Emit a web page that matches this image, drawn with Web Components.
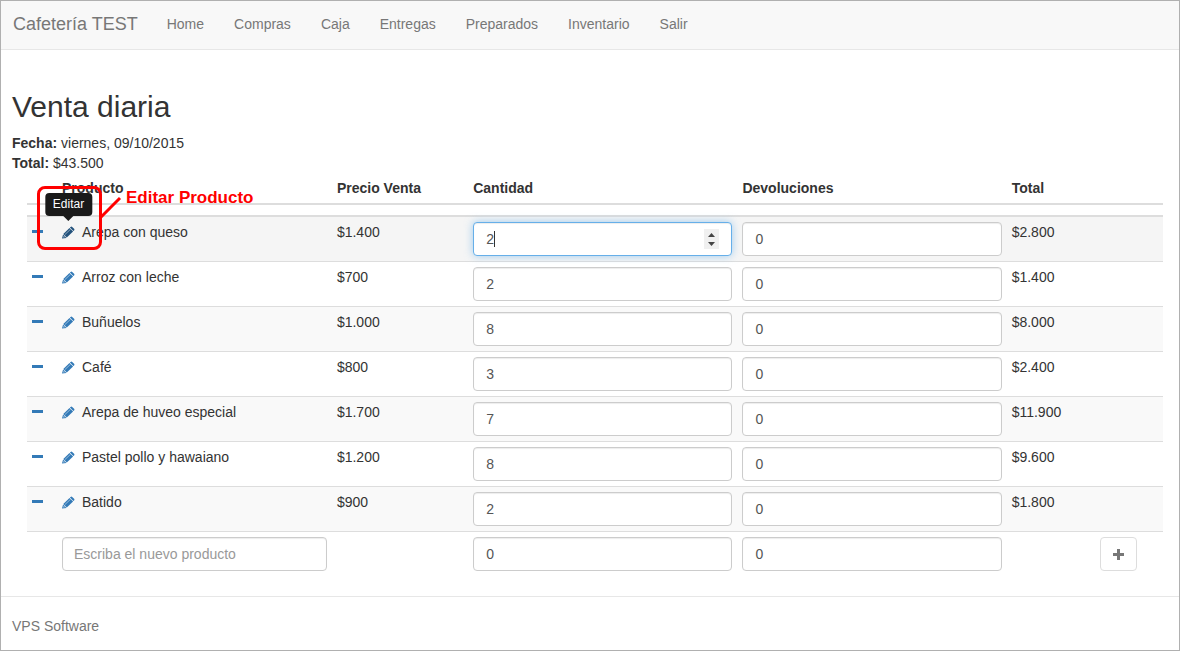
<!DOCTYPE html>
<html lang="es">
  <head>
    <meta charset="utf-8">
    <title>Cafetería TEST</title>
    <style>
      *{box-sizing: border-box;}
      body {
        margin: 0;
        min-height: 100vh;
        border: 1px solid #b0b0b0;
        background: #fff;
        color: #333;
        font: 14px/20px "Liberation Sans", Arial, sans-serif;
      }
    </style>
  </head>
  <body>

    <vps-navbar brand="Cafetería TEST">
      <a href="#home">Home</a>
      <a href="#compras">Compras</a>
      <a href="#caja">Caja</a>
      <a href="#entregas">Entregas</a>
      <a href="#preparados">Preparados</a>
      <a href="#inventario">Inventario</a>
      <a href="#salir">Salir</a>
    </vps-navbar>

    <vps-page>
      <span slot="title">Venta diaria</span>
      <div><b>Fecha:</b> viernes, 09/10/2015</div>
      <div><b>Total:</b> $43.500</div>
      <vps-sales></vps-sales>
      <span slot="footer">VPS Software</span>
    </vps-page>

    <!-- ICON -------------------------------------------------------------------------------------------- -->

    <script>
      const ICONS = {
        minus: '<path d="M0 5h11v3H0z"/>',
        plus: '<path d="M5 1h3v4h4v3H8v4H5V8H1V5h4z"/>',
        pencil: '<path d="M8.600 .9q.8-.8 1.600 0l1.900 1.900q.8.8 0 1.600l-.7.7-3.500-3.500z"/>' +
          '<path d="M7.500 1.900l3.600 3.600-6.300 6.100-3.500-3.600z"/><path d="M1.100 8.400l3.400 3.500L0 12.600z"/>' +
          '<path d="M2.900 8.600l5.600-5.300" stroke="#fff" stroke-opacity=".6" stroke-width=".8"/>' +
          '<circle cx="1.900" cy="10.900" r=".7" fill="#fff" fill-opacity=".7"/>'
      };

      class VpsIconElement extends HTMLElement {

        constructor(){
          super();
          this.attachShadow({mode: 'open'});
        }

        connectedCallback () {
          this.shadowRoot.innerHTML = `
            <style>
              :host { display: block; width: 13px; height: 13px; }
              svg { display: block; fill: currentColor; }
            </style>
            <svg width="13" height="13" viewBox="0 0 13 13" aria-hidden="true">${ICONS[this.getAttribute('name')]}</svg>`;
        }

      }
      window.customElements.define('vps-icon', VpsIconElement);
    </script>

    <!-- NAVBAR ------------------------------------------------------------------------------------------ -->

    <template id="vps-navbar-template">
      <style>
        :host { display: block; background: #f8f8f8; border-bottom: 1px solid #e7e7e7; }
        nav {
          display: flex; flex-flow: row wrap;
          align-items: center;
          padding: 0 12px 2px;
        }
        .brand { margin-right: 14px; font-size: 18px; color: #777; text-decoration: none; }
        ::slotted(a) { padding: 13px 15px; color: #777; text-decoration: none; }
      </style>
      <nav>
        <a class="brand" href="#"></a>
        <slot></slot>
      </nav>
    </template>

    <script>
      class VpsNavbarElement extends HTMLElement {

        constructor(){
          super();
          this.attachShadow({mode: 'open'});
        }

        connectedCallback () {
          const template = document.querySelector('#vps-navbar-template');
          this.shadowRoot.appendChild(template.content.cloneNode(true));
          this.shadowRoot.querySelector('.brand').textContent = this.getAttribute('brand');
        }

      }
      window.customElements.define('vps-navbar', VpsNavbarElement);
    </script>

    <!-- PAGE -------------------------------------------------------------------------------------------- -->

    <template id="vps-page-template">
      <style>
        :host { display: block; }
        main { padding: 40px 11px 20px; }
        h1 { margin: 0 0 10px; font-size: 30px; line-height: 33px; font-weight: 400; }
        footer { border-top: 1px solid #e7e7e7; padding: 19px 11px 13px; color: #777; }
      </style>
      <main>
        <h1><slot name="title"></slot></h1>
        <slot></slot>
      </main>
      <footer><slot name="footer"></slot></footer>
    </template>

    <script>
      class VpsPageElement extends HTMLElement {

        constructor(){
          super();
          this.attachShadow({mode: 'open'});
        }

        connectedCallback () {
          const template = document.querySelector('#vps-page-template');
          this.shadowRoot.appendChild(template.content.cloneNode(true));
        }

      }
      window.customElements.define('vps-page', VpsPageElement);
    </script>

    <!-- TOOLTIP ----------------------------------------------------------------------------------------- -->

    <template id="vps-tooltip-template">
      <style>
        :host { position: relative; display: block; }
        .bubble {
          position: absolute; z-index: 5;
          bottom: 100%; left: 50%;
          transform: translateX(-50%);
          margin-bottom: 10px;
          padding: 3px 8px;
          border-radius: 4px;
          background: #1a1a1a;
          color: #fff;
          font-size: 12px; line-height: 17px;
        }
        .bubble::after {
          content: '';
          position: absolute;
          top: 100%; left: 50%;
          margin-left: -5px;
          border: 5px solid transparent;
          border-top-color: #1a1a1a;
          border-bottom: 0;
        }
      </style>
      <slot></slot>
      <span class="bubble" role="tooltip"></span>
    </template>

    <script>
      class VpsTooltipElement extends HTMLElement {

        constructor(){
          super();
          this.attachShadow({mode: 'open'});
        }

        connectedCallback () {
          const template = document.querySelector('#vps-tooltip-template');
          this.shadowRoot.appendChild(template.content.cloneNode(true));
          this.shadowRoot.querySelector('.bubble').textContent = this.getAttribute('text');
        }

      }
      window.customElements.define('vps-tooltip', VpsTooltipElement);
    </script>

    <!-- CALLOUT ----------------------------------------------------------------------------------------- -->

    <template id="vps-callout-template">
      <style>
        :host {
          position: absolute; z-index: 6;
          display: flex; align-items: flex-start;
          color: #f00;
          font-size: 17px; font-weight: 700;
          pointer-events: none;
        }
        .frame { width: 65px; height: 64px; border: 3px solid #f00; border-radius: 8px; box-sizing: border-box; }
        svg { margin: 10px 4px 0 -2px; }
        span { white-space: nowrap; line-height: 24px; }
      </style>
      <div class="frame"></div>
      <svg width="22" height="22" aria-hidden="true"><path d="M1 21L20 2" stroke="#f00" stroke-width="3"/></svg>
      <span><slot></slot></span>
    </template>

    <script>
      class VpsCalloutElement extends HTMLElement {

        constructor(){
          super();
          this.attachShadow({mode: 'open'});
        }

        connectedCallback () {
          const template = document.querySelector('#vps-callout-template');
          this.shadowRoot.appendChild(template.content.cloneNode(true));
        }

      }
      window.customElements.define('vps-callout', VpsCalloutElement);
    </script>

    <!-- NUMBER FIELD ------------------------------------------------------------------------------------ -->

    <template id="vps-number-template">
      <style>
        :host { display: block; position: relative; }
        input {
          box-sizing: border-box;
          display: block;
          width: 100%; height: 34px;
          margin: 0; padding: 6px 12px;
          border: 1px solid #ccc; border-radius: 4px;
          background: #fff;
          box-shadow: inset 0 1px 1px rgba(0,0,0,.075);
          color: #555;
          font: inherit;
          outline: 0;
          appearance: textfield;
        }
        input::-webkit-inner-spin-button { appearance: none; margin: 0; }
        .spinner, .caret { display: none; position: absolute; }
        :host([active]) input {
          border-color: #66afe9;
          box-shadow: inset 0 1px 1px rgba(0,0,0,.075), 0 0 8px rgba(102,175,233,.6);
        }
        :host([active]) .spinner { display: block; right: 13px; top: 7px; background: #f0f0f0; }
        :host([active]) .caret { display: block; left: 21px; top: 9px; width: 1px; height: 16px; background: #333; }
      </style>
      <input type="number">
      <i class="caret"></i>
      <svg class="spinner" width="15" height="20" aria-hidden="true">
        <path d="M4 8l3.500-4L11 8zM4 13l3.500 4L11 13z" fill="#444"/>
      </svg>
    </template>

    <script>
      class VpsNumberElement extends HTMLElement {

        constructor(){
          super();
          this.attachShadow({mode: 'open'});
        }

        connectedCallback () {
          const template = document.querySelector('#vps-number-template');
          this.shadowRoot.appendChild(template.content.cloneNode(true));
          const input = this.shadowRoot.querySelector('input');
          input.value = this.getAttribute('value');
          input.setAttribute('aria-label', this.getAttribute('label'));
        }

      }
      window.customElements.define('vps-number', VpsNumberElement);
    </script>

    <!-- SALES TABLE ------------------------------------------------------------------------------------- -->

    <template id="vps-sales-template">
      <style>
        *{box-sizing: border-box;}
        :host { display: block; position: relative; padding: 0 5px 0 15px; }
        table { width: 100%; table-layout: fixed; border-collapse: collapse; }
        th, td { padding: 5px; text-align: left; vertical-align: top; }
        thead th { border-bottom: 2px solid #ddd; }
        .gap td { height: 12px; padding: 0; }
        .items { border-top: 2px solid #ddd; }
        .items td, .new td { border-top: 1px solid #ddd; }
        .items tr:first-child td { border-top: 0; }
        .items tr:nth-child(odd) { background: #f9f9f9; }
        .items tr.hover { background: #f5f5f5; }
        button { font: inherit; cursor: pointer; }
        .link { display: block; padding: 0; border: 0; background: none; color: #337ab7; }
        .remove { margin-top: 3px; }
        .hover .edit { color: #23527c; }
        .name { display: flex; align-items: center; gap: 7px; white-space: nowrap; }
        .product {
          display: block;
          width: 100%; height: 34px;
          padding: 6px 11px;
          border: 1px solid #ccc; border-radius: 4px;
          box-shadow: inset 0 1px 1px rgba(0,0,0,.075);
          color: #555;
          font: inherit;
        }
        .product::placeholder { color: #999; }
        .add {
          display: block;
          padding: 6px 11px; height: 34px;
          border: 1px solid #ddd; border-radius: 4px;
          background: #fff;
          color: #777;
        }
        vps-callout { top: 13px; left: 25px; }
      </style>
      <table>
        <colgroup>
          <col style="width: 30px">
          <col style="width: 24.2%">
          <col style="width: 12%">
          <col style="width: 23.7%">
          <col style="width: 23.7%">
          <col>
          <col style="width: 6%">
        </colgroup>
        <thead>
          <tr>
            <th></th><th>Producto</th><th>Precio Venta</th><th>Cantidad</th><th>Devoluciones</th><th colspan="2">Total</th>
          </tr>
        </thead>
        <tbody class="gap"><tr><td colspan="7"></td></tr></tbody>
        <tbody class="items"></tbody>
        <tbody class="new">
          <tr>
            <td></td>
            <td><input class="product" type="text" placeholder="Escriba el nuevo producto" aria-label="Nuevo producto"></td>
            <td></td>
            <td><vps-number value="0" label="Cantidad"></vps-number></td>
            <td><vps-number value="0" label="Devoluciones"></vps-number></td>
            <td></td>
            <td><button class="add" type="button" aria-label="Agregar"><vps-icon name="plus"></vps-icon></button></td>
          </tr>
        </tbody>
      </table>
      <vps-callout>Editar Producto</vps-callout>
    </template>

    <script>
      const SALES = [
        {name: 'Arepa con queso', price: '$1.400', amount: 2, total: '$2.800', active: true},
        {name: 'Arroz con leche', price: '$700', amount: 2, total: '$1.400'},
        {name: 'Buñuelos', price: '$1.000', amount: 8, total: '$8.000'},
        {name: 'Café', price: '$800', amount: 3, total: '$2.400'},
        {name: 'Arepa de huveo especial', price: '$1.700', amount: 7, total: '$11.900'},
        {name: 'Pastel pollo y hawaiano', price: '$1.200', amount: 8, total: '$9.600'},
        {name: 'Batido', price: '$900', amount: 2, total: '$1.800'}
      ];

      class VpsSalesElement extends HTMLElement {

        constructor(){
          super();
          this.attachShadow({mode: 'open'});
        }

        connectedCallback () {
          const template = document.querySelector('#vps-sales-template');
          this.shadowRoot.appendChild(template.content.cloneNode(true));
          this.shadowRoot.querySelector('.items').innerHTML = SALES.map(this.row).join('');
        }

        row (item) {
          const icon = '<vps-icon name="pencil"></vps-icon>';
          return `
            <tr class="${item.active ? 'hover' : ''}">
              <td><button class="link remove" type="button" aria-label="Quitar"><vps-icon name="minus"></vps-icon></button></td>
              <td><div class="name">
                <button class="link edit" type="button" aria-label="Editar">${item.active ? `<vps-tooltip text="Editar">${icon}</vps-tooltip>` : icon}</button>
                <span>${item.name}</span>
              </div></td>
              <td>${item.price}</td>
              <td><vps-number value="${item.amount}" label="Cantidad" ${item.active ? 'active' : ''}></vps-number></td>
              <td><vps-number value="0" label="Devoluciones"></vps-number></td>
              <td colspan="2">${item.total}</td>
            </tr>`;
        }

      }
      window.customElements.define('vps-sales', VpsSalesElement);
    </script>

  </body>
</html>
